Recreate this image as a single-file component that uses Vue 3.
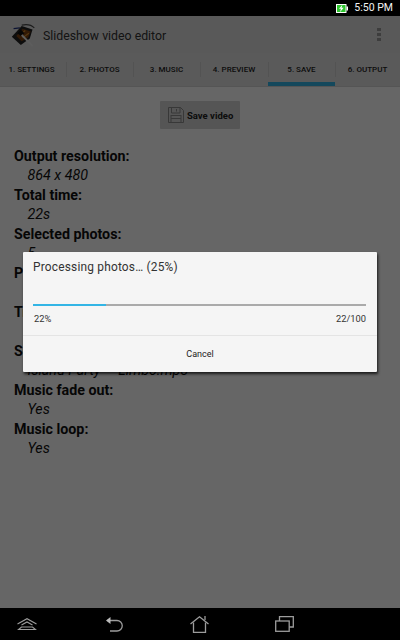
<template>
  <div class="screen">
    <div class="status-bar">
      <svg class="battery" width="12" height="9" viewBox="0 0 12 9">
        <rect x="0" y="0" width="10.5" height="9" fill="#fff" />
        <rect x="1" y="1" width="8.5" height="7" fill="#2fc62f" />
        <rect x="10.5" y="2.5" width="1.5" height="4" fill="#fff" />
        <path d="M6.4 0.8 L3 4.8 H4.9 L4 8.2 L7.6 3.8 H5.6 Z" fill="#fff" />
      </svg>
      <span class="clock">5:50 PM</span>
    </div>

    <div class="page">
      <div class="action-bar">
        <svg class="app-icon" width="27" height="24" viewBox="0 0 30 26">
          <path d="M4 6 L11 5" stroke="#1c2f7a" stroke-width="1.4" fill="none" />
          <path d="M2 15 L13 3 L25 7 L22 17 L12 24 Z" fill="#222" />
          <path d="M7 14 L14 6 L23 9 L20 16 L13 20 Z" fill="#7a3f10" />
          <path d="M11 13 L17 8 M14 16 L21 11" stroke="#d08a2a" stroke-width="1.2" />
          <path d="M13 2 Q22 0 27 5" stroke="#444" stroke-width="1.2" fill="none" />
          <path d="M8 11 L12 7 L16 11 L12 14 Z" fill="#111" />
          <path d="M13 13 L25 25" stroke="#e8e8e8" stroke-width="2" />
        </svg>
        <span class="app-title">Slideshow video editor</span>
        <div class="overflow">
          <i></i><i></i><i></i>
        </div>
      </div>

      <div class="tabs">
        <div
          v-for="(tab, i) in tabs"
          :key="tab"
          class="tab"
          :class="{ active: i === 4 }"
        >
          <span>{{ tab }}</span>
        </div>
      </div>

      <div class="content">
        <button class="save-btn">
          <svg width="16" height="16" viewBox="0 0 16 16" fill="none" stroke="#8c8c8c" stroke-width="1">
            <path d="M0.5 0.5 H12.5 L15.5 3.5 V15.5 H0.5 Z" />
            <path d="M3.5 0.5 V6 H12 V0.5 M8.5 2 V4.5" />
            <rect x="3" y="8.5" width="10" height="7" />
            <path d="M3 11.5 H13" />
          </svg>
          <span>Save video</span>
        </button>

        <div class="summary">
          <template v-for="row in summary" :key="row.label">
            <div class="label">{{ row.label }}</div>
            <div class="value">{{ row.value }}</div>
          </template>
        </div>
      </div>

      <div class="scrim"></div>

      <div class="dialog">
        <div class="dialog-title">Processing photos… (25%)</div>
        <div class="progress">
          <div class="progress-fill" :style="{ width: progress + '%' }"></div>
        </div>
        <div class="progress-text">
          <span>22%</span>
          <span>22/100</span>
        </div>
        <div class="dialog-action">Cancel</div>
      </div>
    </div>

    <div class="nav-bar">
      <svg width="20" height="12" viewBox="0 0 20 12" fill="none" stroke="#9c9c9c" stroke-width="1.1">
        <path d="M0.5 6 L10 0.7 L19.5 6" />
        <path d="M4.5 7 L10 4 L15.5 7" />
        <path d="M1.5 11.5 H18.5 L15.5 9 H4.5 Z" />
      </svg>
      <svg width="18" height="16" viewBox="0 0 18 16" fill="none" stroke="#9c9c9c" stroke-width="1.3">
        <path d="M1 4.5 H11 A5 5 0 0 1 11 15 H4" />
        <path d="M0 4.5 L4.5 1 V8 Z" fill="#bcbcbc" stroke="none" />
      </svg>
      <svg width="19" height="17" viewBox="0 0 19 17" fill="none" stroke="#9c9c9c" stroke-width="1.3">
        <path d="M0.5 8 L9.5 0.8 L18.5 8" />
        <path d="M3.5 6.5 V16.3 H15.5 V6.5" />
        <path d="M15 0 V4" />
      </svg>
      <svg width="19" height="16" viewBox="0 0 19 16" fill="none" stroke="#9c9c9c" stroke-width="1.3">
        <rect x="0.7" y="5" width="13.5" height="10.3" />
        <path d="M4.5 5 V0.7 H18.3 V11 H14.2" />
      </svg>
    </div>
  </div>
</template>

<script setup>
const tabs = ['1. SETTINGS', '2. PHOTOS', '3. MUSIC', '4. PREVIEW', '5. SAVE', '6. OUTPUT']
const progress = 22

const summary = [
  { label: 'Output resolution:', value: '864 x 480' },
  { label: 'Total time:', value: '22s' },
  { label: 'Selected photos:', value: '5' },
  { label: 'Photo duration:', value: '4s' },
  { label: 'Transition:', value: 'Fade' },
  { label: 'Selected music:', value: 'Island Party \u00a0-\u00a0 Limbo.mp3' },
  { label: 'Music fade out:', value: 'Yes' },
  { label: 'Music loop:', value: 'Yes' }
]
</script>

<style>
html, body { margin: 0; background: #000; }
</style>

<style scoped>
.screen { width: 400px; height: 640px; display: flex; flex-direction: column; overflow: hidden; font-family: Roboto, "Liberation Sans", sans-serif; }
.status-bar { height: 16px; flex: none; background: #000; display: flex; justify-content: flex-end; align-items: center; gap: 6px; padding-right: 7px; color: #f2f2f2; }
.clock { font-size: 10.5px; line-height: 16px; }
.page { flex: 1; position: relative; display: flex; flex-direction: column; background: #fff; min-height: 0; }
.action-bar { height: 37px; flex: none; background: #dfdfdf; display: flex; align-items: center; padding-left: 10px; }
.app-icon { flex: none; }
.app-title { margin-left: 6px; padding-top: 2px; font-size: 12.3px; color: #333; }
.overflow { margin-left: auto; margin-right: 19px; display: flex; flex-direction: column; gap: 1.5px; }
.overflow i { display: block; width: 4px; height: 3.5px; background: #999; }
.tabs { height: 33px; flex: none; background: #e2e2e2; display: grid; grid-template-columns: 66px 67px 67px 68px 67px 65px; border-bottom: 1px solid #d4d4d4; }
.tab { display: flex; align-items: center; justify-content: center; font-size: 8px; font-weight: 500; color: #222; position: relative; }
.tab:first-child { padding-right: 3px; }
.tab + .tab::before { content: ''; position: absolute; left: 0; top: 9px; bottom: 9px; width: 1px; background: #d0d0d0; }
.tab.active::after { content: ''; position: absolute; left: 0; right: 0; bottom: 0; height: 4px; background: #33b5e5; }
.content { flex: 1; padding: 14px 14px 0; }
.save-btn { display: flex; align-items: center; gap: 3px; width: 80px; height: 28px; padding: 0 0 0 8px; margin: 0 auto; border: 0; border-radius: 1px; background: #d4d4d4; font-family: inherit; font-size: 9.5px; font-weight: 700; color: #222; }
.summary { margin-top: 18px; font-size: 14.25px; line-height: 19.5px; color: #111; }
.label { font-weight: 700; }
.value { font-style: italic; padding-left: 13.5px; margin-top: -0.5px; margin-bottom: 0.5px; }
.scrim { position: absolute; inset: 0; background: rgba(0, 0, 0, 0.6); }
.dialog { position: absolute; left: 23px; top: 236px; width: 354px; height: 120px; background: #f5f5f5; box-shadow: 1px 2px 3px rgba(0, 0, 0, 0.75); display: flex; flex-direction: column; border-radius: 1px; }
.dialog-title { margin: 8px 10px 0; font-size: 11.9px; line-height: 15px; color: #333; letter-spacing: 0.2px; }
.progress { margin: 29px 11px 0 10px; height: 2px; background: #aaa; flex: none; }
.progress-fill { height: 100%; background: #33b5e5; }
.progress-text { margin: 7px 11px 0 11px; display: flex; justify-content: space-between; font-size: 9.3px; line-height: 11px; color: #333; }
.dialog-action { margin-top: 11px; border-top: 1px solid #e4e4e4; flex: 1; display: flex; align-items: center; justify-content: center; font-size: 9px; color: #222; }
.nav-bar { height: 32px; flex: none; background: #000; display: grid; grid-template-columns: 89px 84px 85px auto; align-items: center; padding-left: 17px; }
</style>
